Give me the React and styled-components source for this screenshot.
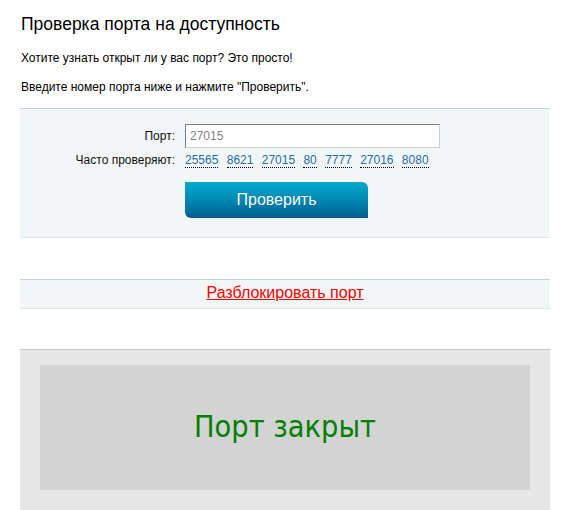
import React from "react";
import styled, { createGlobalStyle } from "styled-components";

const Global = createGlobalStyle`
  html, body { margin: 0; padding: 0; background: #fff; }
  body { font-family: "Liberation Sans", Arial, sans-serif; color: #000; }
`;

const Page = styled.div`
  width: 530px;
  margin-left: 20px;
  padding-bottom: 20px;
`;

const Title = styled.h1`
  margin: 14px 0 0;
  font-size: 17.5px;
  line-height: 20px;
  font-weight: normal;
  padding-left: 1px;
`;

const Text = styled.p`
  margin: ${(p) => p.$top}px 0 0;
  font-size: 12px;
  line-height: 14px;
  padding-left: 1px;
`;

const Panel = styled.div`
  margin-top: ${(p) => p.$top}px;
  background: #f2f6f6;
  border-top: 1px solid #c3d5d9;
  border-bottom: 1px solid #dce7e7;
`;

const FormPanel = styled(Panel)`
  padding: 15px 0 19px;
`;

const Row = styled.div`
  display: flex;
  align-items: center;
  margin-top: ${(p) => p.$top || 0}px;
`;

const Label = styled.div`
  width: 165px;
  flex: none;
  box-sizing: border-box;
  padding-right: 10px;
  text-align: right;
  font-size: 12px;
  line-height: 16px;
  color: #111;
`;

const Input = styled.input`
  box-sizing: border-box;
  width: 255px;
  height: 24px;
  margin: 0;
  padding: 0 4px;
  font-family: "Liberation Sans", Arial, sans-serif;
  font-size: 12px;
  color: #808080;
  background: #fff;
  border: 1px solid;
  border-color: #7c7c7c #cfcfcf #cfcfcf #7c7c7c;
  outline: none;
`;

const Links = styled.div`
  display: flex;
  gap: 8.33px;
  height: 16px;
  align-items: flex-start;
  padding-top: 1px;
  box-sizing: border-box;
`;

const PortLink = styled.a`
  display: inline-block;
  font-size: 12px;
  line-height: 14px;
  color: #1f6ea6;
  text-decoration: none;
  border-bottom: 1px dotted #000;
  cursor: pointer;
`;

const CheckButton = styled.button`
  margin: 0 0 0 165px;
  width: 183px;
  height: 36px;
  padding: 0;
  border: none;
  border-radius: 0 6px 0 6px;
  background: linear-gradient(to bottom, #03aacb 0%, #0088b3 50%, #005d8d 100%);
  color: #fff;
  font-family: "Liberation Sans", Arial, sans-serif;
  font-size: 16px;
  line-height: 36px;
  text-shadow: 0 0 1px rgba(0, 60, 90, 0.4);
  cursor: pointer;
`;

const UnblockPanel = styled(Panel)`
  height: 28px;
  box-sizing: content-box;
  text-align: center;
  line-height: 26px;
`;

const UnblockLink = styled.a`
  font-size: 16px;
  color: #ff0000;
  text-decoration: underline;
  cursor: pointer;
`;

const ResultPanel = styled.div`
  margin-top: 40px;
  background: #e7e7e7;
  border-top: 1px solid #c8c8c8;
  padding: 15px 20px 20px;
`;

const ResultBox = styled.div`
  height: 125px;
  background: #d3d3d3;
  display: flex;
  align-items: center;
  justify-content: center;
  font-family: "DejaVu Sans Condensed", "DejaVu Sans", Verdana, sans-serif;
  font-size: 30.4px;
  color: #008000;
  padding-bottom: 3px;
  box-sizing: border-box;
`;

const ports = ["25565", "8621", "27015", "80", "7777", "27016", "8080"];

export default function App() {
  return (
    <>
      <Global />
      <Page>
        <Title>Проверка порта на доступность</Title>
        <Text $top={17}>Хотите узнать открыт ли у вас порт? Это просто!</Text>
        <Text $top={15}>Введите номер порта ниже и нажмите "Проверить".</Text>
        <FormPanel $top={14}>
          <Row>
            <Label>Порт:</Label>
            <Input defaultValue="27015" />
          </Row>
          <Row $top={4}>
            <Label>Часто проверяют:</Label>
            <Links>
              {ports.map((p) => (
                <PortLink key={p}>{p}</PortLink>
              ))}
            </Links>
          </Row>
          <Row $top={14}>
            <CheckButton>Проверить</CheckButton>
          </Row>
        </FormPanel>
        <UnblockPanel $top={41}>
          <UnblockLink>Разблокировать порт</UnblockLink>
        </UnblockPanel>
        <ResultPanel>
          <ResultBox>Порт закрыт</ResultBox>
        </ResultPanel>
      </Page>
    </>
  );
}
